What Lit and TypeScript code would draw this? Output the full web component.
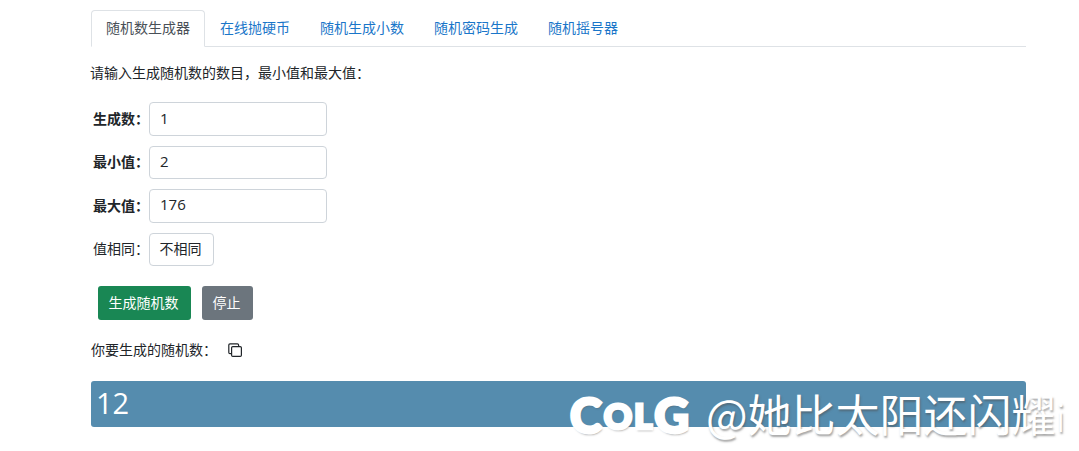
import { LitElement, html, css } from "lit";
import { customElement } from "lit/decorators.js";

@customElement("app-root")
export class AppRoot extends LitElement {
  static styles = css`
    :host {
      display: block;
      position: relative;
      width: 1079px;
      height: 451px;
      overflow: hidden;
      background: #fff;
      color: #212529;
      font-family: "Noto Sans CJK SC", "Noto Sans", sans-serif;
      font-size: 14px;
    }
    .page { display: flex; flex-direction: column; padding: 10px 53px 0 91px; }
    .tabs { display: flex; height: 37px; border-bottom: 1px solid #dee2e6; box-sizing: border-box; }
    .tab { display: flex; align-items: center; padding: 0 14px 3px; color: #1a76c9; border: 1px solid transparent; white-space: nowrap; box-sizing: border-box; height: 37px; }
    .tab.active { color: #495057; border-color: #dee2e6 #dee2e6 #fff; border-radius: 4px 4px 0 0; background: #fff; }
    .intro { margin: 0 0 0 -1px; height: 55.1px; display: flex; align-items: center; padding-bottom: 6px; box-sizing: border-box; }
    .rows { display: flex; flex-direction: column; gap: 9.67px; }
    .row { display: flex; align-items: center; height: 33.83px; }
    .label { width: 58px; padding: 0 0 2px 2px; box-sizing: border-box; font-weight: 700; }
    .label.plain { font-weight: 400; }
    .input { width: 178px; height: 100%; box-sizing: border-box; border: 1px solid #ced4da; border-radius: 4px; padding: 0 10px 3px; display: flex; align-items: center; font: 400 15px "Open Sans", "Noto Sans", sans-serif; color: #212529; }
    .select { width: 65px; justify-content: center; padding: 0 2px 3px 0; font: 400 14px "Noto Sans CJK SC", sans-serif; }
    .buttons { display: flex; gap: 11px; margin: 20px 0 0 7px; }
    .btn { height: 34px; padding: 0 2px 3px 0; box-sizing: border-box; border-radius: 3px; color: #fff; display: flex; align-items: center; justify-content: center; }
    .go { width: 93px; background: #198754; }
    .stop { width: 51px; background: #6c757d; }
    .out { display: flex; align-items: center; height: 20px; margin-top: 20px; }
    .out span { padding-bottom: 2px; }
    .out svg { margin-left: 10px; display: block; }
    .result { margin-top: 21px; height: 46px; background: #558cae; border-radius: 3px; color: #fff; font: 400 29px/1 "Open Sans", "Noto Sans", sans-serif; padding: 7px 0 0 5px; box-sizing: border-box; }
    .mark { position: absolute; left: 570px; top: 391px; display: flex; align-items: center; white-space: nowrap; color: #fff; text-shadow: 1px 2px 2px rgba(80, 80, 80, .5); }
    .logo { display: flex; align-items: center; width: 136px; font: 900 48px/1 "Lato", "Noto Sans", sans-serif; -webkit-text-stroke: 3px #fff; letter-spacing: 2px; }
    .small { font-size: 35px; }
    .name { font-size: 44px; line-height: 1; font-weight: 400; margin-bottom: 4px; }
    .sliver { font-size: 38px; font-weight: 300; }
  `;

  render() {
    const row = (label: string, value: string) => html`
      <div class="row"><div class="label">${label}：</div><div class="input">${value}</div></div>`;
    return html`
      <div class="page">
        <div class="tabs">
          <div class="tab active">随机数生成器</div>
          <div class="tab">在线抛硬币</div>
          <div class="tab">随机生成小数</div>
          <div class="tab">随机密码生成</div>
          <div class="tab">随机摇号器</div>
        </div>
        <p class="intro">请输入生成随机数的数目，最小值和最大值：</p>
        <div class="rows">
          ${row("生成数", "1")}
          ${row("最小值", "2")}
          ${row("最大值", "176")}
          <div class="row">
            <div class="label plain">值相同：</div>
            <div class="input select">不相同</div>
          </div>
        </div>
        <div class="buttons">
          <div class="btn go">生成随机数</div>
          <div class="btn stop">停止</div>
        </div>
        <div class="out">
          <span>你要生成的随机数：</span>
          <svg width="16" height="16" viewBox="0 0 16 16" fill="none" stroke="#212529" stroke-width="1.2">
            <rect x="4.6" y="4.6" width="9.8" height="9.8" rx="1.2"></rect>
            <path d="M4.6 11.6H3a1.2 1.2 0 0 1-1.2-1.2V3A1.2 1.2 0 0 1 3 1.8h7.4A1.2 1.2 0 0 1 11.6 3v1.6"></path>
          </svg>
        </div>
        <div class="result">12</div>
      </div>
      <div class="mark"><span class="logo">C<span class="small">O</span><span class="small">L</span>G</span><span class="name">@她比太阳还闪耀<span class="sliver">i</span></span></div>
    `;
  }
}
